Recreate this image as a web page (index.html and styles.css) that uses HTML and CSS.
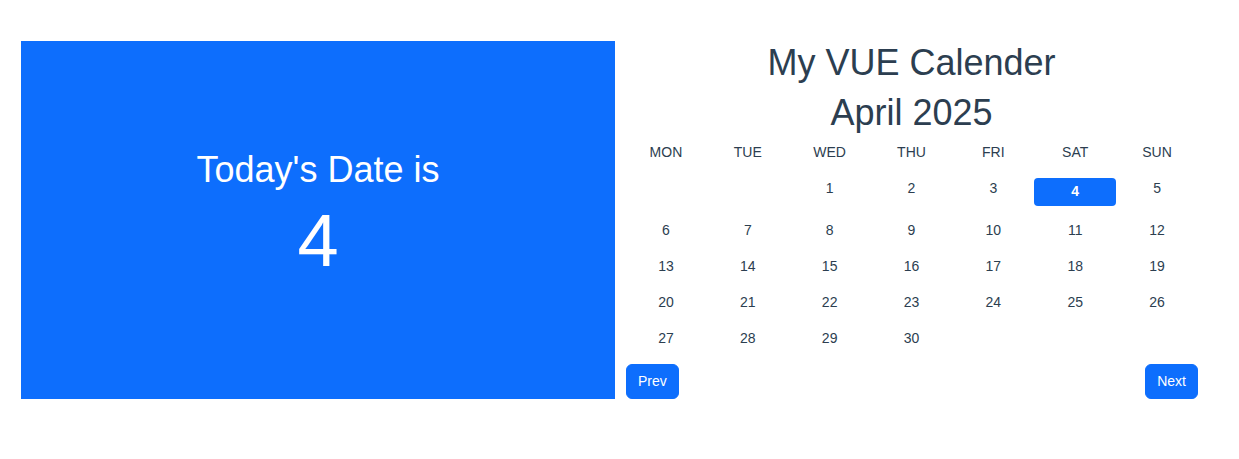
FILE: index.html
```html
<!DOCTYPE html>
<html lang="en">
<head>
<meta charset="utf-8">
<title>My VUE Calender</title>
<link rel="stylesheet" href="styles.css">
</head>
<body>
<div class="page">
  <section class="today">
    <div class="today-label">Today's Date is</div>
    <div class="today-num">4</div>
  </section>
  <section class="calendar">
    <h1 class="title">My VUE Calender</h1>
    <h2 class="month">April 2025</h2>
    <div class="grid">
      <div class="wd">MON</div><div class="wd">TUE</div><div class="wd">WED</div><div class="wd">THU</div><div class="wd">FRI</div><div class="wd">SAT</div><div class="wd">SUN</div>
      <div class="d"></div><div class="d"></div><div class="d">1</div><div class="d">2</div><div class="d">3</div><div class="d current">4</div><div class="d">5</div>
      <div class="d">6</div><div class="d">7</div><div class="d">8</div><div class="d">9</div><div class="d">10</div><div class="d">11</div><div class="d">12</div>
      <div class="d">13</div><div class="d">14</div><div class="d">15</div><div class="d">16</div><div class="d">17</div><div class="d">18</div><div class="d">19</div>
      <div class="d">20</div><div class="d">21</div><div class="d">22</div><div class="d">23</div><div class="d">24</div><div class="d">25</div><div class="d">26</div>
      <div class="d">27</div><div class="d">28</div><div class="d">29</div><div class="d">30</div><div class="d"></div><div class="d"></div><div class="d"></div>
    </div>
    <div class="nav">
      <button class="btn">Prev</button>
      <button class="btn">Next</button>
    </div>
  </section>
</div>
</body>
</html>
```
FILE: styles.css
```css
html, body {
  margin: 0;
  background: #fff;
}
body {
  font-family: "Liberation Sans", Arial, Helvetica, sans-serif;
  color: #2c3e50;
}
.page {
  display: flex;
  align-items: flex-start;
  padding: 41px 0 0 21px;
}
.today {
  width: 594px;
  height: 358px;
  box-sizing: border-box;
  padding-bottom: 6px;
  background: #0d6efd;
  color: #fff;
  display: flex;
  flex-direction: column;
  align-items: center;
  justify-content: center;
}
.today-label {
  font-size: 36px;
  line-height: 1.2;
  margin-bottom: 6px;
}
.today-num {
  font-size: 74px;
  line-height: 1.2;
}
.calendar {
  width: 573px;
  margin-left: 10px;
  text-align: center;
}
.title, .month {
  font-size: 36px;
  font-weight: normal;
  line-height: 43px;
  margin: 0;
}
.title {
  margin-bottom: 7px;
}
.grid {
  display: grid;
  grid-template-columns: repeat(7, 1fr);
  font-size: 14px;
}
.wd, .d {
  height: 36px;
  line-height: 36px;
  align-self: start;
}
.d.current {
  height: 28px;
  line-height: 26px;
  margin: 8px 0 6px;
  background: #0d6efd;
  color: #fff;
  font-weight: bold;
  border-radius: 4px;
}
.nav {
  display: flex;
  justify-content: space-between;
  margin: 8px 0 0 1px;
}
.btn {
  font-family: "Liberation Sans", Arial, sans-serif;
  font-size: 14px;
  line-height: 21px;
  padding: 6px 11px;
  border: 1px solid #0d6efd;
  border-radius: 6px;
  background: #0d6efd;
  color: #fff;
  cursor: pointer;
}
```
